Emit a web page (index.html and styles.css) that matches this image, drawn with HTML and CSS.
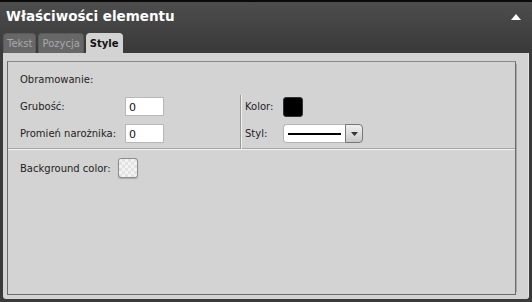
FILE: index.html
```html
<!DOCTYPE html>
<html lang="pl">
<head>
  <meta charset="UTF-8">
  <title>Właściwości elementu</title>
  <link rel="stylesheet" href="styles.css">
</head>
<body>
    <div class="panel">
        <div class="panel-head">
            <div class="title-row">
                <span class="title">Właściwości elementu</span>
                <svg class="collapse" width="10" height="6" viewBox="0 0 10 6"><polygon points="0,6 5,0 10,6" fill="#fff"/></svg>
            </div>
            <ul class="tabs">
                <li class="tab">Tekst</li>
                <li class="tab">Pozycja</li>
                <li class="tab active">Style</li>
            </ul>
        </div>

        <div class="panel-body">
            <div class="frame">
                <div class="border-section">
                    <div class="section-title">Obramowanie:</div>
                    <div class="cols">
                        <div class="col left">
                            <div class="row">
                                <label>Grubość:</label>
                                <input type="text" value="0" class="num">
                            </div>
                            <div class="row">
                                <label>Promień narożnika:</label>
                                <input type="text" value="0" class="num">
                            </div>
                        </div>
                        <div class="col right">
                            <div class="row">
                                <label>Kolor:</label>
                                <span class="swatch black"></span>
                            </div>
                            <div class="row">
                                <label>Styl:</label>
                                <div class="line-select">
                                    <span class="line-value"><span class="line"></span></span>
                                    <span class="line-btn">
                                        <svg width="7" height="4" viewBox="0 0 7 4"><polygon points="0,0 7,0 3.5,4" fill="#333"/></svg>
                                    </span>
                                </div>
                            </div>
                        </div>
                    </div>
                </div>

                <div class="bg-row">
                    <label>Background color:</label>
                    <span class="swatch empty"></span>
                </div>
            </div>
        </div>
    </div>
</body>
</html>
```

FILE: styles.css
```css
body {
    margin: 0;
    padding: 0;
    background: #3a3a3a;
    font-family: 'DejaVu Sans', sans-serif;
    font-size: 10px;
    color: #1e1e1e;
}

.panel {
    width: 532px;
    height: 302px;
    border-top: 2px solid #0a0a0a;
    box-sizing: border-box;
    display: flex;
    flex-direction: column;
}

.panel-head {
    height: 51px;
    background: linear-gradient(#4d4d4d, #393939);
    display: flex;
    flex-direction: column;
    justify-content: space-between;
}

.title-row {
    display: flex;
    justify-content: space-between;
    align-items: center;
    height: 28px;
    padding: 0 11px 0 6px;
}

.title {
    color: #fff;
    font-weight: bold;
    font-size: 13.5px;
}

.collapse {
    margin-top: 2px;
}

.tabs {
    list-style-type: none;
    margin: 0;
    padding: 0 0 0 3px;
    display: flex;
    gap: 2px;
}

.tab {
    height: 19px;
    line-height: 20px;
    padding: 0 3px;
    background: #676767;
    color: #a9a9a9;
    border-radius: 4px 4px 0 0;
    border: 1px solid #5a5a5a;
    border-bottom: none;
    font-size: 10px;
}

.tab.active {
    background: #d3d3d3;
    color: #111;
    font-weight: bold;
    border-color: #d3d3d3;
}

.panel-body {
    flex: 1;
    margin: 0 3px 3px 3px;
    background: #d3d3d3;
    border-radius: 0 0 3px 3px;
    padding: 8px 12px 4px 4px;
    box-sizing: border-box;
    display: flex;
    border-right: 1px solid #e4e4e4;
}

.frame {
    flex: 1;
    border: 1px solid #6b6b6b;
    border-top-color: #8a8a8a;
    box-shadow: 4px 0 0 -3px #a8a8a8;
}

.border-section {
    padding: 11px 0 0 12px;
    height: 75px;
    border-bottom: 1px solid #a5a5a5;
    box-shadow: 0 1px 0 #f2f2f2;
}

.section-title {
    height: 13px;
    line-height: 13px;
}

.cols {
    display: flex;
    margin-top: 11px;
}

.col {
    display: flex;
    flex-direction: column;
    gap: 8px;
}

.col.left {
    width: 221px;
}

.col.right {
    border-left: 1px solid #f0f0f0;
    box-shadow: -1px 0 0 #9a9a9a;
    padding-left: 3px;
    margin-top: -2px;
    padding-top: 2px;
    padding-bottom: 6px;
}

.row {
    display: flex;
    align-items: center;
    height: 19px;
}

.col.left label {
    width: 105px;
}

.col.right label {
    width: 38px;
}

.num {
    width: 39px;
    height: 19px;
    box-sizing: border-box;
    border: 1px solid #b8b8b8;
    background: #fff;
    padding: 2px 3px 0;
    font-family: 'DejaVu Sans', sans-serif;
    font-size: 11px;
    color: #111;
    margin: 0;
}

.swatch {
    display: block;
    width: 20px;
    height: 20px;
    box-sizing: border-box;
    border-radius: 3px;
}

.swatch.black {
    background: #000;
    border: 1px solid #333;
}

.swatch.empty {
    border: 1px solid #8c8c8c;
    background-color: #f4f4f4;
    background-image: linear-gradient(45deg, #e2e2e2 25%, transparent 25%, transparent 75%, #e2e2e2 75%),
        linear-gradient(45deg, #e2e2e2 25%, transparent 25%, transparent 75%, #e2e2e2 75%);
    background-size: 6px 6px;
    background-position: 0 0, 3px 3px;
    box-shadow: 0 1px 1px #aaa;
}

.line-select {
    display: flex;
    height: 19px;
    width: 80px;
}

.line-value {
    flex: 1;
    background: #fff;
    border: 1px solid #b5b5b5;
    border-right: none;
    border-radius: 4px 0 0 4px;
    display: flex;
    align-items: center;
    padding: 0 4px;
}

.line {
    display: block;
    width: 100%;
    height: 2px;
    background: #000;
}

.line-btn {
    width: 16px;
    border: 1px solid #777;
    border-radius: 0 4px 4px 0;
    background: linear-gradient(#f0f0f0, #c8c8c8);
    display: flex;
    align-items: center;
    justify-content: center;
}

.bg-row {
    display: flex;
    align-items: center;
    padding: 9px 0 0 12px;
}

.bg-row label {
    width: 98px;
}
```
